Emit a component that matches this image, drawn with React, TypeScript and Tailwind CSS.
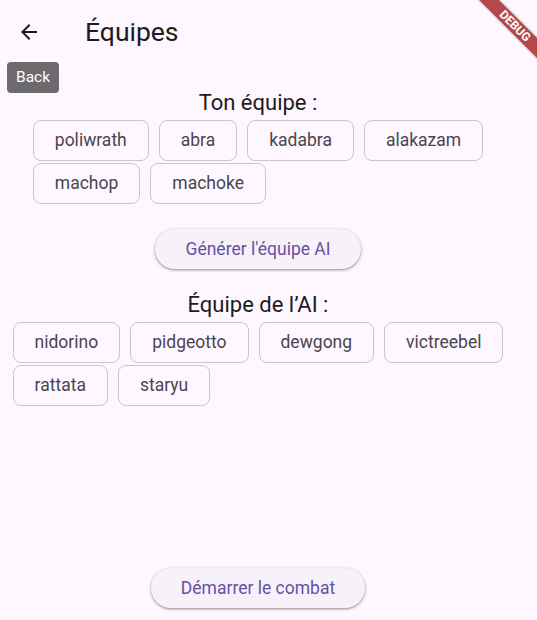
const myTeam = [
  ["poliwrath", "abra", "kadabra", "alakazam"],
  ["machop", "machoke"],
];

const aiTeam = [
  ["nidorino", "pidgeotto", "dewgong", "victreebel"],
  ["rattata", "staryu"],
];

function Chip({ label }: { label: string }) {
  return (
    <div className="h-[41px] flex items-center px-[21px] border border-[#cac4d0] rounded-lg text-[17.5px] text-[#49454f]">
      {label}
    </div>
  );
}

function Team({ title, rows }: { title: string; rows: string[][] }) {
  return (
    <div className="flex flex-col items-center">
      <h2 className="text-[22px] leading-6 text-[#1d1b20]">{title}</h2>
      <div className="mt-[5px] flex flex-col gap-[2px]">
        {rows.map((row, i) => (
          <div key={i} className="flex gap-[10px]">
            {row.map((name) => (
              <Chip key={name} label={name} />
            ))}
          </div>
        ))}
      </div>
    </div>
  );
}

function PillButton({ label }: { label: string }) {
  return (
    <button className="h-10 px-[30px] rounded-full bg-[#f7f2fa] text-[17.5px] text-[#6750a4] shadow-[0_1px_2px_rgba(0,0,0,0.3),0_1px_3px_1px_rgba(0,0,0,0.12)]">
      {label}
    </button>
  );
}

export default function App() {
  return (
    <div
      className="relative h-[620px] overflow-hidden bg-[#fef7ff] flex flex-col"
      style={{ fontFamily: "Roboto, sans-serif" }}
    >
      <header className="h-16 flex items-center shrink-0">
        <button className="w-14 h-12 flex items-center justify-center ml-[1px]">
          <svg width="24" height="24" viewBox="0 0 24 24" fill="#1d1b20">
            <path d="M20 11H7.83l5.59-5.59L12 4l-8 8 8 8 1.41-1.41L7.83 13H20v-2z" />
          </svg>
        </button>
        <h1 className="ml-[28px] text-[26.5px] leading-8 text-[#1d1b20]">Équipes</h1>
      </header>

      <main className="flex-1 flex flex-col items-center pr-[21px] pt-[27px]">
        <Team title="Ton équipe :" rows={myTeam} />
        <div className="mt-[25px]">
          <PillButton label="Générer l'équipe AI" />
        </div>
        <div className="mt-[24px]">
          <Team title="Équipe de l’AI :" rows={aiTeam} />
        </div>
        <div className="mt-auto mb-3">
          <PillButton label="Démarrer le combat" />
        </div>
      </main>

      <div className="absolute left-[7px] top-[62px] h-[31px] px-[9px] flex items-center rounded bg-[#6d6a6e] text-white text-[15.5px]">
        Back
      </div>

      <div className="absolute top-0 right-0 w-[60px] h-[60px] overflow-hidden pointer-events-none">
        <div className="absolute left-[-12px] top-[19px] w-[100px] h-[14px] rotate-45 bg-[#b4494b] flex items-center justify-center text-white text-[12px] font-bold shadow-[0_0_3px_rgba(0,0,0,0.3)]">
          DEBUG
        </div>
      </div>
    </div>
  );
}
